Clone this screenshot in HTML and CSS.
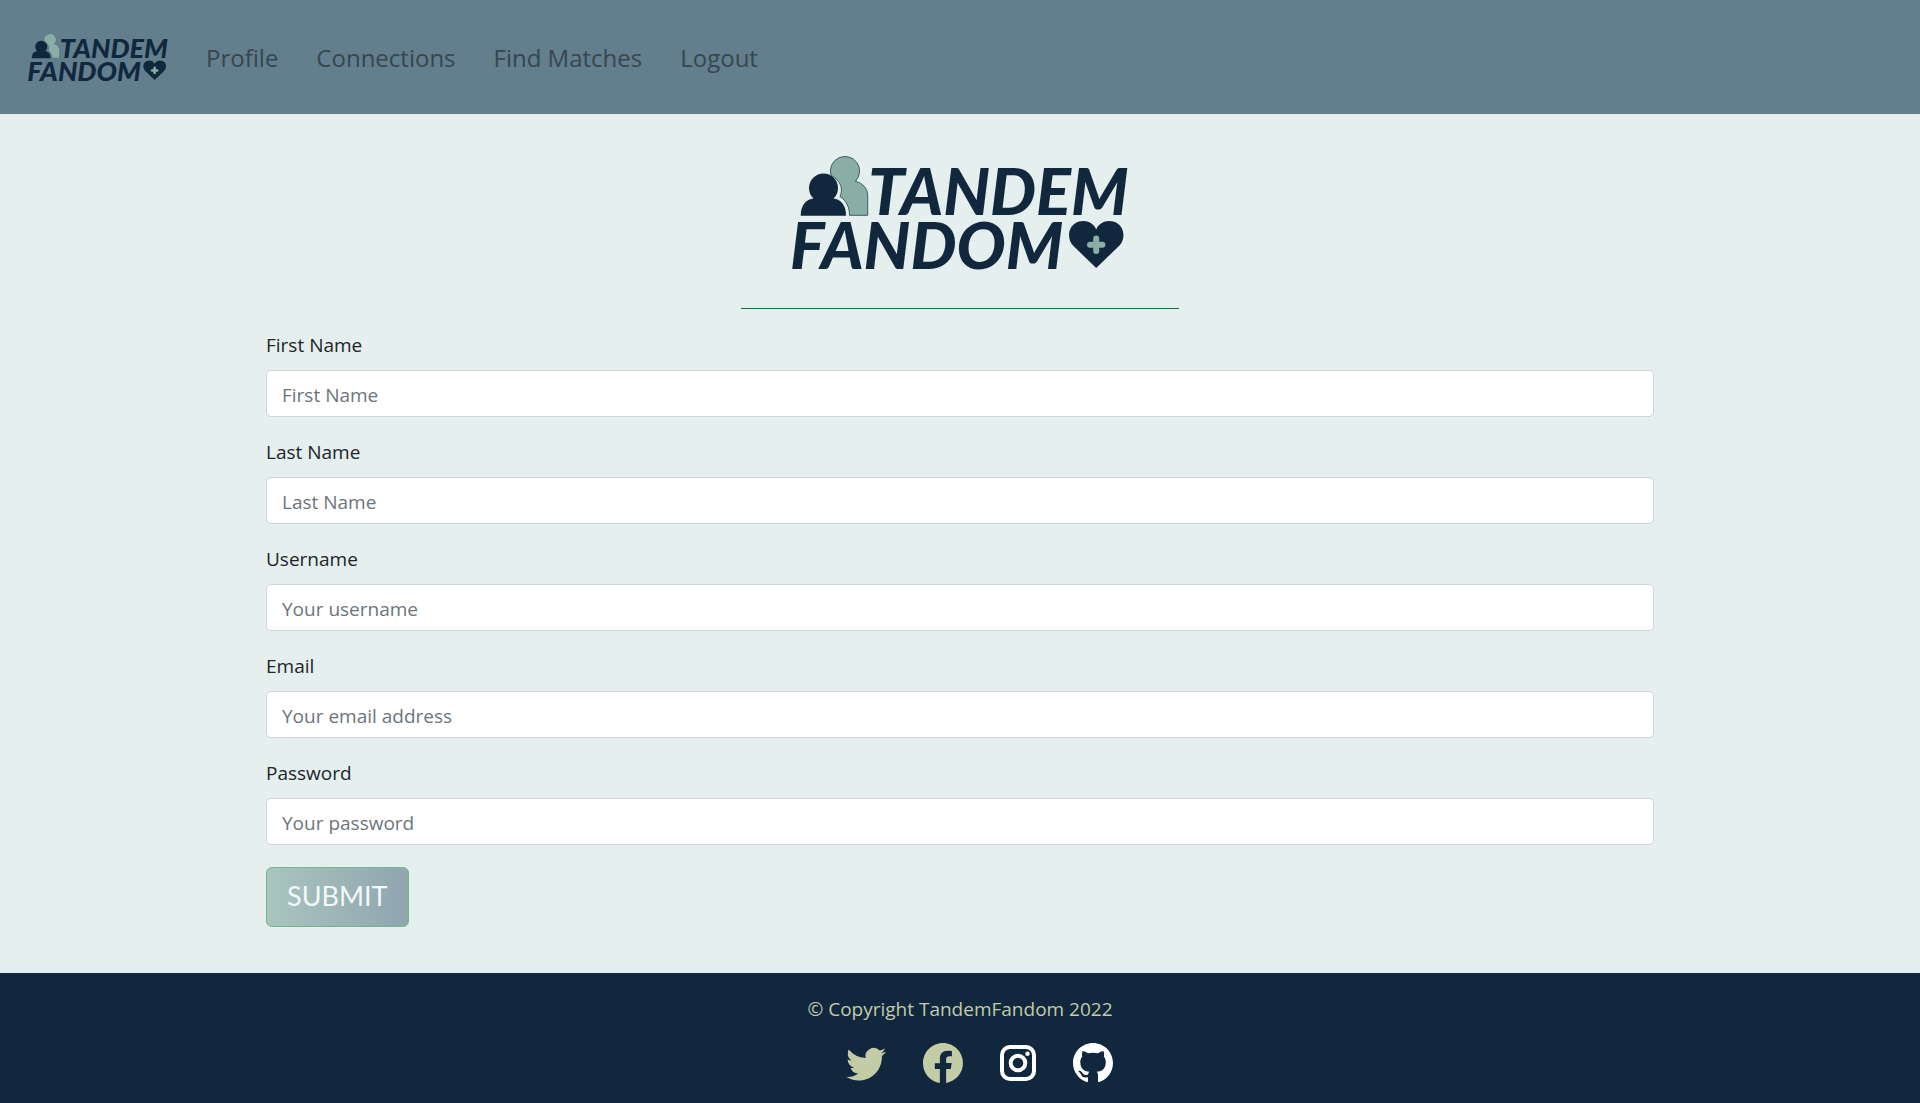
FILE: index.html
```html
<!DOCTYPE html>
<html lang="en">
<head>
<meta charset="utf-8">
<meta name="viewport" content="width=device-width, initial-scale=1">
<title>TandemFandom</title>
<link rel="stylesheet" href="styles.css">
</head>
<body>
<header class="navbar">
  <a class="brand" href="#" aria-label="TandemFandom home">
    <svg class="brand-logo" viewBox="0 0 350 125">
      <path class="logo-back" d="M46 25.200A14.600 14.600 0 1 1 70.300 31.400C78 33 82.700 38.500 82.700 46V65.300H64.500C64.500 57 61.500 51 55 46.500C58.500 39 56 31 46 25.200Z"/>
      <circle class="logo-ink" cx="38.500" cy="38" r="14.500"/>
      <path class="logo-ink" d="M15.700 65.700C15.700 55 21 49 30 48.300H47C56 49 61 55 61 65.700Z"/>
      <text class="logo-word" x="83" y="65">TANDEM</text>
      <text class="logo-word" x="5" y="119">FANDOM</text>
      <path class="logo-ink" d="M311.200 118L288 95.500C282 89 283 78 290 73.500C298 68.500 308 71.500 311.200 79.500C314.500 71.500 324.500 68.500 332.500 73.500C339.500 78 340.500 89 334.500 95.500Z"/>
      <path class="logo-plus" d="M311.200 88.500V100.900M305 94.700H317.400"/>
    </svg>
  </a>
  <nav class="nav-links">
    <a href="#">Profile</a>
    <a href="#">Connections</a>
    <a href="#">Find Matches</a>
    <a href="#">Logout</a>
  </nav>
</header>

<main class="container">
  <svg class="hero-logo" viewBox="0 0 350 125" role="img" aria-label="TandemFandom">
    <path class="logo-back" d="M46 25.200A14.600 14.600 0 1 1 70.300 31.400C78 33 82.700 38.500 82.700 46V65.300H64.500C64.500 57 61.500 51 55 46.500C58.500 39 56 31 46 25.200Z"/>
    <circle class="logo-ink" cx="38.500" cy="38" r="14.500"/>
    <path class="logo-ink" d="M15.700 65.700C15.700 55 21 49 30 48.300H47C56 49 61 55 61 65.700Z"/>
    <text class="logo-word" x="83" y="65">TANDEM</text>
    <text class="logo-word" x="5" y="119">FANDOM</text>
    <path class="logo-ink" d="M311.200 118L288 95.500C282 89 283 78 290 73.500C298 68.500 308 71.500 311.200 79.500C314.500 71.500 324.500 68.500 332.500 73.500C339.500 78 340.500 89 334.500 95.500Z"/>
    <path class="logo-plus" d="M311.200 88.500V100.900M305 94.700H317.400"/>
  </svg>
  <hr class="rule">
  <form class="signup">
    <div class="field"><label for="first">First Name</label><input id="first" type="text" placeholder="First Name"></div>
    <div class="field"><label for="last">Last Name</label><input id="last" type="text" placeholder="Last Name"></div>
    <div class="field"><label for="username">Username</label><input id="username" type="text" placeholder="Your username"></div>
    <div class="field"><label for="email">Email</label><input id="email" type="email" placeholder="Your email address"></div>
    <div class="field"><label for="password">Password</label><input id="password" type="password" placeholder="Your password"></div>
    <button class="submit" type="submit">SUBMIT</button>
  </form>
</main>

<footer class="footer">
  <p>© Copyright TandemFandom 2022</p>
  <div class="social">
    <a href="#" aria-label="Twitter"><svg width="40" height="40" viewBox="0 0 16 16"><path d="M5.026 15c6.038 0 9.341-5.003 9.341-9.334 0-.14 0-.282-.006-.422A6.685 6.685 0 0 0 16 3.542a6.658 6.658 0 0 1-1.889.518 3.301 3.301 0 0 0 1.447-1.817 6.533 6.533 0 0 1-2.087.793A3.286 3.286 0 0 0 7.875 6.030a9.325 9.325 0 0 1-6.767-3.429 3.289 3.289 0 0 0 1.018 4.382A3.323 3.323 0 0 1 .64 6.575v.045a3.288 3.288 0 0 0 2.632 3.218 3.203 3.203 0 0 1-.865.115 3.230 3.230 0 0 1-.614-.057 3.283 3.283 0 0 0 3.067 2.277A6.588 6.588 0 0 1 .78 13.580a6.320 6.320 0 0 1-.78-.045A9.344 9.344 0 0 0 5.026 15z"/></svg></a>
    <a href="#" aria-label="Facebook"><svg width="40" height="40" viewBox="0 0 16 16"><path d="M16 8.049c0-4.446-3.582-8.050-8-8.050C3.580 0-.002 3.603-.002 8.050c0 4.017 2.926 7.347 6.750 7.951v-5.625h-2.030V8.050H6.750V6.275c0-2.017 1.195-3.131 3.022-3.131.876 0 1.791.157 1.791.157v1.980h-1.009c-.993 0-1.303.621-1.303 1.258v1.510h2.218l-.354 2.326H9.250V16c3.824-.604 6.750-3.934 6.750-7.951z"/></svg></a>
    <a class="light" href="#" aria-label="Instagram"><svg width="36" height="40" viewBox="0 0 36 40"><rect class="line" x="2" y="4" width="32" height="32" rx="8"/><circle class="line" cx="18" cy="20" r="7.300"/><circle cx="27.500" cy="10.700" r="2.200"/></svg></a>
    <a class="light" href="#" aria-label="GitHub"><svg width="40" height="40" viewBox="0 0 16 16"><path d="M8 0C3.580 0 0 3.580 0 8c0 3.540 2.290 6.530 5.470 7.590.4.070.55-.17.55-.38 0-.19-.010-.82-.010-1.490-2.010.37-2.530-.49-2.690-.94-.09-.23-.48-.94-.82-1.130-.28-.15-.68-.52-.010-.53.63-.010 1.080.58 1.230.82.72 1.210 1.870.87 2.330.66.070-.52.28-.87.510-1.070-1.780-.2-3.640-.89-3.640-3.950 0-.87.310-1.590.82-2.150-.080-.2-.36-1.020.080-2.120 0 0 .67-.21 2.200.82.64-.18 1.320-.27 2-.27.68 0 1.360.09 2 .27 1.530-1.040 2.200-.82 2.200-.82.44 1.100.16 1.920.080 2.120.510.56.82 1.270.82 2.150 0 3.070-1.870 3.750-3.650 3.950.29.25.54.73.54 1.480 0 1.070-.010 1.930-.010 2.200 0 .21.15.46.55.38A8.012 8.012 0 0 0 16 8c0-4.420-3.580-8-8-8z"/></svg></a>
  </div>
</footer>
</body>
</html>
```

FILE: styles.css
```css
* { box-sizing: border-box; }
body {
  margin: 0;
  min-height: 100vh;
  display: flex;
  flex-direction: column;
  background: #e5efed;
  color: #212529;
  font: 19px/30px "Open Sans", "Noto Sans", sans-serif;
}
a { color: inherit; text-decoration: none; }
svg { display: block; overflow: visible; }

.logo-ink { fill: #10273e; }
.logo-back { fill: #88aea6; stroke: #3f5c6b; stroke-width: 1; }
.logo-plus { stroke: #88aea6; stroke-width: 6; stroke-linecap: round; }
.logo-word { fill: #10273e; font: italic 900 65px Lato, sans-serif; }

.navbar {
  display: flex;
  align-items: center;
  gap: 35px;
  min-height: 114px;
  padding: 0 25px;
  background: #637e8c;
}
.brand-logo { width: 146px; height: 52px; }
.nav-links { display: flex; gap: 38px; padding-top: 2px; font-size: 24px; color: #36474f; }

.container {
  flex: 1;
  width: 100%;
  max-width: 1428px;
  margin: 0 auto;
  padding: 36px 20px 44px;
}
.hero-logo { width: 350px; height: 125px; margin: 0 auto; }
.rule {
  width: 438px;
  max-width: 100%;
  margin: 33px auto 21px;
  border: 0;
  border-top: 1px solid #146c43;
}
.field { display: flex; flex-direction: column; gap: 10px; margin-bottom: 20px; }
.field input {
  width: 100%;
  height: 47px;
  padding: 8px 15px 6px;
  border: 1px solid #ced4da;
  border-radius: 5px;
  background: #fff;
  color: #212529;
  font: inherit;
}
.field input::placeholder { color: #6c757d; opacity: 1; }
.submit {
  display: block;
  height: 60px;
  padding: 0 20px 2px;
  margin-top: 22px;
  border: 1px solid #6cbb82;
  border-radius: 6px;
  background: linear-gradient(90deg, #a9c5be, #90a5b0);
  color: #f3f8f8;
  font: 27px/38px Lato, sans-serif;
}

.footer {
  padding: 21px 20px 20px;
  background: #10273e;
  color: #c3cca4;
  text-align: center;
}
.footer p { margin: 0 0 19px; }
.social {
  display: flex;
  justify-content: center;
  gap: 37px;
  padding-left: 39px;
}
.social svg { fill: currentColor; }
.social .light { color: #fff; }
.social .line { fill: none; stroke: currentColor; stroke-width: 4; }
```
